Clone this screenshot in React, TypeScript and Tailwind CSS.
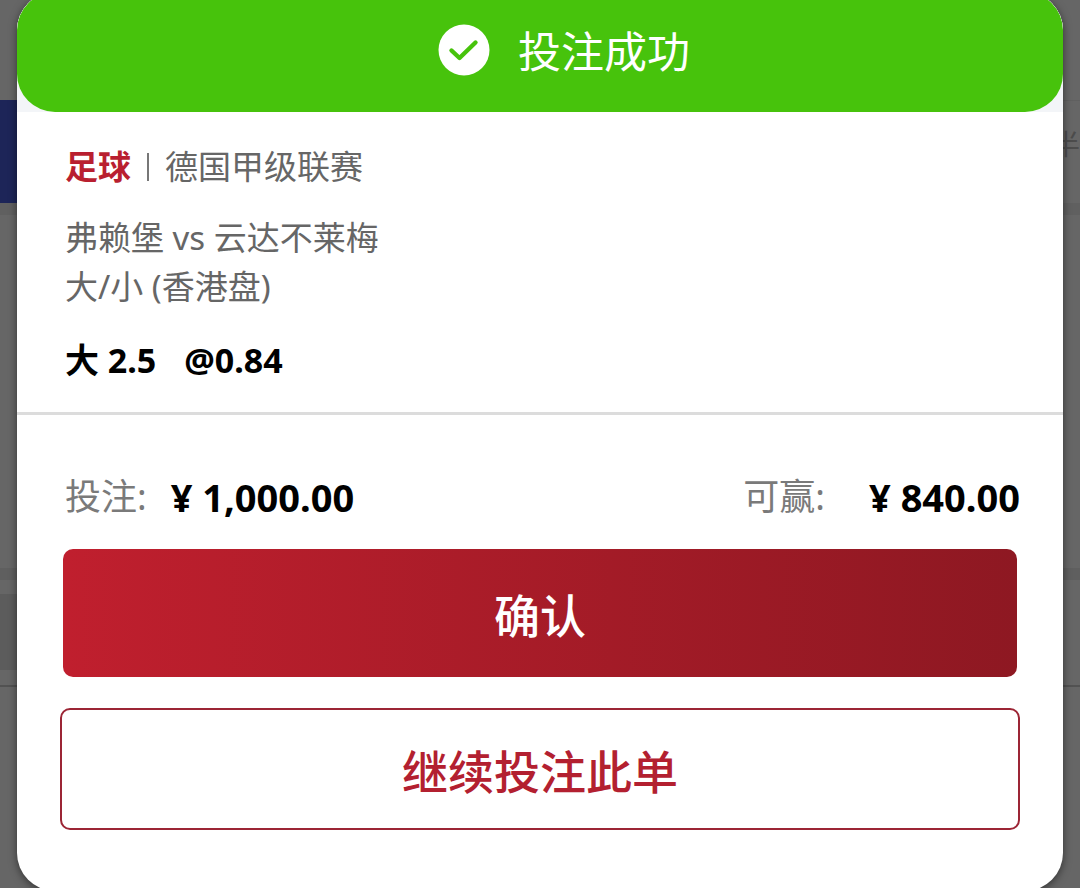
interface Bet {
  sport: string;
  league: string;
  match: string;
  market: string;
  pick: string;
  odds: string;
  stake: string;
  win: string;
}

interface AmountProps {
  label: string;
  value: string;
  gap: string;
}

const bet: Bet = {
  sport: "足球",
  league: "德国甲级联赛",
  match: "弗赖堡 vs 云达不莱梅",
  market: "大/小 (香港盘)",
  pick: "大 2.5",
  odds: "@0.84",
  stake: "¥ 1,000.00",
  win: "¥ 840.00",
};

function DimmedPage() {
  return (
    <div className="flex h-full flex-col bg-[#666666]" aria-hidden="true">
      <div className="h-[100px]" />
      <div className="flex h-[103px] justify-between">
        <div className="w-1/2 bg-[#1d2558]" />
        <div className="flex w-1/2 items-center justify-end border-t border-[#606060] pb-4">
          <span className="text-[28px] leading-9 text-[#4c4c4c]">半</span>
        </div>
      </div>
      <div className="h-3 bg-[#606060]" />
      <div className="h-[353px]" />
      <div className="h-3 bg-[#5f5f5f]" />
      <div className="h-[14px]" />
      <div className="h-[76px] w-1/2 bg-[#5c5c5c]" />
      <div className="h-[15px]" />
      <div className="h-[2px] bg-[#525252]" />
    </div>
  );
}

function CheckBadge() {
  return (
    <svg viewBox="0 0 52 52" className="h-[52px] w-[52px] shrink-0" aria-hidden="true">
      <circle cx="26" cy="26" r="25.5" fill="#ffffff" />
      <path
        d="M13.5 26.5 21.5 34 37.5 18.5"
        fill="none"
        stroke="#47c30c"
        strokeWidth="4.4"
        strokeLinecap="round"
        strokeLinejoin="round"
      />
    </svg>
  );
}

function Amount({ label, value, gap }: AmountProps) {
  return (
    <div className={`flex items-center ${gap}`}>
      <dt className="text-[36px] text-[#7a7a7a]">{label}</dt>
      <dd className="text-[38px] font-bold text-black">{value}</dd>
    </div>
  );
}

export default function App() {
  return (
    <div className="fixed inset-0 overflow-hidden font-['Noto_Sans','Noto_Sans_CJK_SC',sans-serif]" lang="zh-CN">
      <DimmedPage />

      <div
        className="absolute inset-x-[17px] -top-2 overflow-hidden rounded-[38px] bg-white shadow-[0_2px_8px_rgba(0,0,0,0.5)]"
        role="dialog"
        aria-labelledby="bet-title"
      >
        <div className="bg-[#f3f5f8]">
          <header className="flex h-[120px] items-start justify-center gap-7 rounded-[38px] bg-[#47c30c] pt-8 pl-12 text-white">
            <CheckBadge />
            <h1 id="bet-title" className="text-[43px] leading-[56px]">
              投注成功
            </h1>
          </header>
        </div>

        <section className="border-b-3 border-[#dcdcdc] px-12 pt-[31px] pb-7 text-[33px] leading-[48px] text-[#666666]">
          <p className="flex gap-4">
            <strong className="font-bold text-[#b91f30]">{bet.sport}</strong>
            <span className="my-[10px] w-[2px] bg-[#777777]" />
            <span>{bet.league}</span>
          </p>
          <div className="mt-[22px] leading-[49px]">
            <p>{bet.match}</p>
            <p>{bet.market}</p>
          </div>
          <p className="mt-[25px] flex gap-7 text-[34px] font-bold text-black">
            <span>{bet.pick}</span>
            <span>{bet.odds}</span>
          </p>
        </section>

        <section className="px-[43px] pt-[58px] pb-[61px]">
          <dl className="flex justify-between pl-[5px] leading-[48px]">
            <Amount label="投注:" value={bet.stake} gap="gap-6" />
            <Amount label="可赢:" value={bet.win} gap="gap-11" />
          </dl>
          <div className="mt-7 px-[3px]">
            <button
              type="button"
              className="h-32 w-full rounded-[10px] bg-linear-to-r from-[#c01f2e] to-[#8e1822] pt-1 text-[46px] font-medium text-white"
            >
              确认
            </button>
          </div>
          <button
            type="button"
            className="mt-[31px] h-[122px] w-full rounded-[10px] border-2 border-[#9c2535] bg-white pt-1 text-[46px] font-medium text-[#b32030]"
          >
            继续投注此单
          </button>
        </section>
      </div>
    </div>
  );
}
